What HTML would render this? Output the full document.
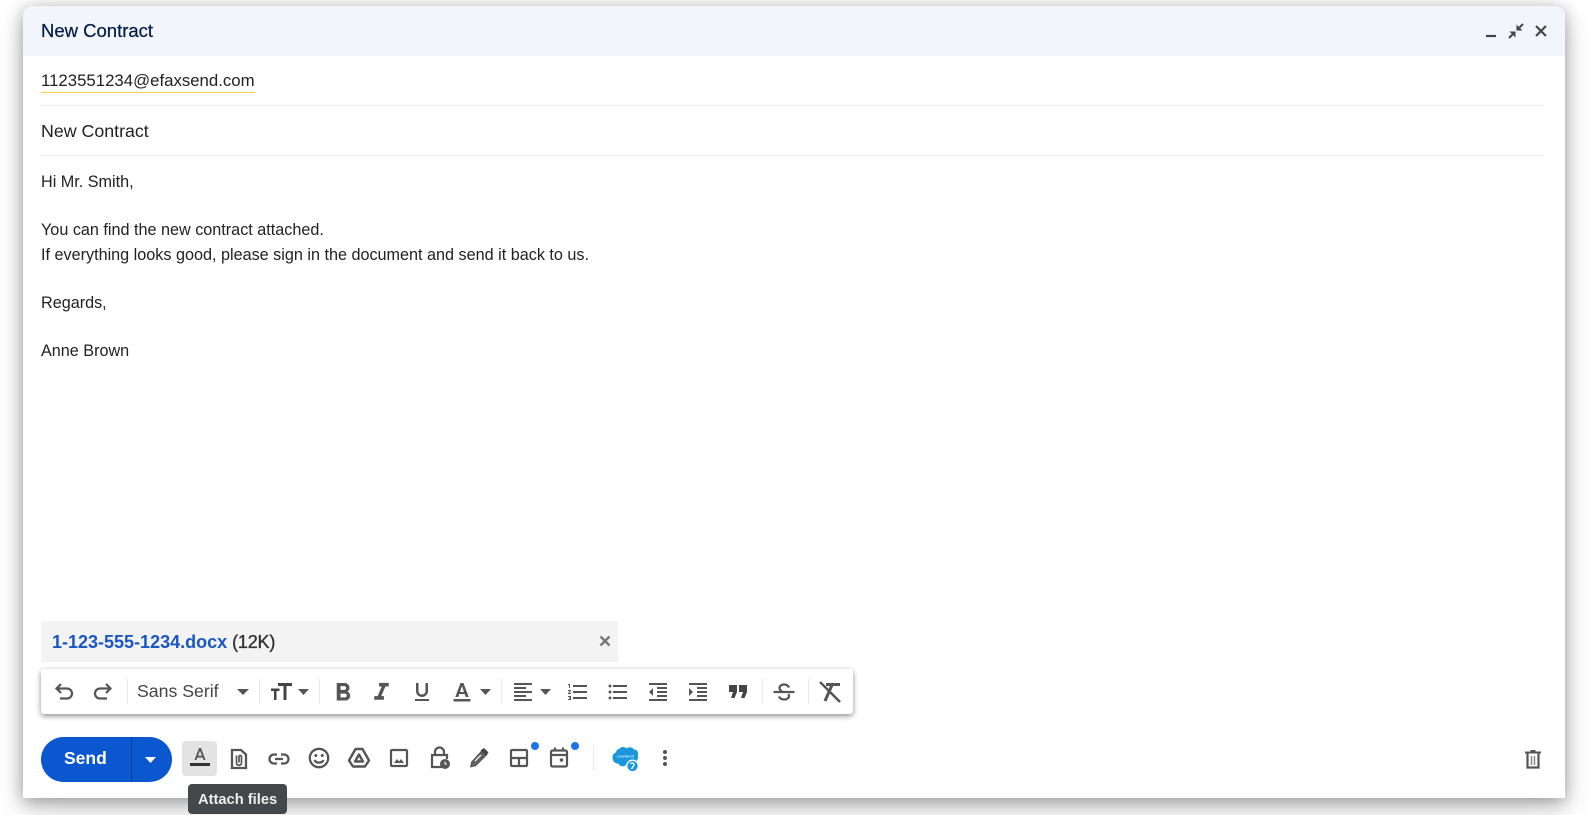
<!DOCTYPE html>
<html><head><meta charset="utf-8"><style>
*{box-sizing:border-box}
html,body{margin:0;padding:0;width:1594px;height:815px;overflow:hidden;background:#fff;font-family:"Liberation Sans",sans-serif}
.a{position:absolute}
.t{position:absolute;white-space:nowrap;line-height:20px}
svg.i{position:absolute;overflow:visible}
.s{position:absolute;width:1px;background:#e6e6e6}
.c{position:absolute;left:23px;top:6px;width:1542px;height:792px;background:#fff;border-radius:10px 10px 0 0;box-shadow:0 3px 16px rgba(0,0,0,.32),0 12px 30px rgba(0,0,0,.16)}
</style></head><body>
<div class="c"></div>
<div class="a" style="left:23px;top:6px;width:1542px;height:50px;background:#f2f6fc;border-radius:10px 10px 0 0"></div>
<div class="t" style="left:41px;top:21px;font-size:18.500px;color:#041e49;-webkit-text-stroke:.25px #041e49">New Contract</div>
<svg class="i" style="left:1486px;top:20px" width="70" height="22" fill="none" stroke="#444" stroke-width="2.200"><path d="M0 16H10"/><path d="M29.500 11.500V17.500L23.500 11.500zM30.500 10.500V4.500L36.500 10.500z" fill="#444" stroke="none"/><path d="M26.500 14.500L23 18M33.500 7.500L37 4" stroke-width="2"/><path d="M50 6L60 16M60 6L50 16"/></svg>

<div class="t" style="left:41px;top:71px;font-size:16.800px;color:#222;border-bottom:1px solid #fbc94a;height:22px">1123551234@efaxsend.com</div>
<div class="a" style="left:41px;top:105px;width:1504px;height:1px;background:#ececec"></div>
<div class="t" style="left:41px;top:121px;font-size:17.800px;color:#222">New Contract</div>
<div class="a" style="left:41px;top:155px;width:1504px;height:1px;background:#ececec"></div>

<div class="t" style="left:41px;top:172px;font-size:16.200px;color:#222">Hi Mr. Smith,</div>
<div class="t" style="left:41px;top:220px;font-size:16.200px;color:#222">You can find the new contract attached.</div>
<div class="t" style="left:41px;top:245px;font-size:16.200px;color:#222">If everything looks good, please sign in the document and send it back to us.</div>
<div class="t" style="left:41px;top:293px;font-size:16.200px;color:#222">Regards,</div>
<div class="t" style="left:41px;top:341px;font-size:16.200px;color:#222">Anne Brown</div>

<div class="a" style="left:41px;top:621px;width:577px;height:41px;background:#f3f3f3"></div>
<div class="t" style="left:52px;top:632px;font-size:18px;font-weight:bold;color:#1a56c4">1-123-555-1234.docx <span style="color:#333;font-weight:normal;letter-spacing:-.2px;-webkit-text-stroke:.35px #333">(12K)</span></div>
<svg class="i" style="left:598px;top:634px" width="14" height="14" fill="none" stroke="#777" stroke-width="2.400"><path d="M2.500 2.500L11.500 11.500M11.500 2.500L2.500 11.500"/></svg>

<div class="a" style="left:41px;top:669px;width:812px;height:45px;background:#fff;border-radius:3px;box-shadow:0 2px 6px rgba(0,0,0,.45)"></div>
<div class="s" style="left:127px;top:679px;height:25px"></div>
<div class="s" style="left:259px;top:679px;height:25px"></div>
<div class="s" style="left:319px;top:679px;height:25px"></div>
<div class="s" style="left:501px;top:679px;height:25px"></div>
<div class="s" style="left:762px;top:679px;height:25px"></div>
<div class="s" style="left:808px;top:679px;height:25px"></div>

<svg class="i" style="left:52px;top:680px" width="24" height="24" fill="none" stroke="#555" stroke-width="2.200"><path d="M9 4L4.500 8.500L9 13M5 8.500H15A5 5 0 0 1 15 18.500H8"/></svg>
<svg class="i" style="left:91px;top:680px" width="24" height="24" fill="none" stroke="#555" stroke-width="2.200"><path d="M15 4L19.500 8.500L15 13M19 8.500H9A5 5 0 0 0 9 18.500H16"/></svg>
<div class="t" style="left:137px;top:681px;font-size:17.700px;color:#444">Sans Serif</div>
<svg class="i" style="left:237px;top:689px" width="12" height="7" fill="#555"><path d="M0 0H12L6 6z"/></svg>
<svg class="i" style="left:270px;top:682px" width="24" height="20" fill="#444"><path d="M8 1H22V4H16.500V18H13.500V4H8zM1 6.500H9.500V9H6.500V18H4V9H1z"/></svg>
<svg class="i" style="left:298px;top:689px" width="12" height="7" fill="#555"><path d="M0 0H11L5.500 6z"/></svg>
<svg class="i" style="left:328px;top:678px" width="30" height="30" viewBox="0 0 24 24" fill="#555"><path d="M15.600 10.790c.97-.67 1.650-1.770 1.650-2.790 0-2.260-1.750-4-4-4H7v14h7.040c2.090 0 3.710-1.700 3.710-3.790 0-1.520-.86-2.820-2.150-3.420zM10 6.500h3c.83 0 1.500.67 1.500 1.500s-.67 1.500-1.500 1.500h-3v-3zm3.500 9H10v-3h3.500c.83 0 1.500.67 1.500 1.500s-.67 1.500-1.500 1.500z"/></svg>
<svg class="i" style="left:367px;top:678px" width="29" height="29" viewBox="0 0 24 24" fill="#555"><path d="M10 4v3h2.210l-3.420 8H6v3h8v-3h-2.210l3.420-8H18V4z"/></svg>
<svg class="i" style="left:410px;top:680px" width="24" height="24" fill="#555"><path d="M12 17c3.310 0 6-2.690 6-6V3h-2.500v8c0 1.930-1.570 3.500-3.500 3.500S8.500 12.930 8.500 11V3H6v8c0 3.310 2.690 6 6 6zm-7 2v2h14v-2H5z"/></svg>
<svg class="i" style="left:450px;top:680px" width="24" height="24" fill="#555"><path d="M10.500 3L5.300 17H8.300L9.300 14H14.700L15.700 17H18.700L13.500 3zM10 12L12 6L14 12zM3.500 19H20.500V21.500H3.500z"/></svg>
<svg class="i" style="left:480px;top:689px" width="12" height="7" fill="#555"><path d="M0 0H11L5.500 6z"/></svg>
<svg class="i" style="left:511px;top:680px" width="24" height="24" fill="#555"><path d="M15 15H3v2h12v-2zm0-8H3v2h12V7zM3 13h18v-2H3v2zm0 8h18v-2H3v2zM3 3v2h18V3H3z"/></svg>
<svg class="i" style="left:540px;top:689px" width="12" height="7" fill="#555"><path d="M0 0H11L5.500 6z"/></svg>
<svg class="i" style="left:566px;top:680px" width="24" height="24" fill="#555"><path d="M2 17h2v.5H3v1h1v.5H2v1h3v-4H2v1zm1-9h1V4H2v1h1v3zm-1 3h1.800L2 13.100v.9h3v-1H3.200L5 10.900V10H2v1zm5-6v2h14V5H7zm0 14h14v-2H7v2zm0-6h14v-2H7v2z"/></svg>
<svg class="i" style="left:606px;top:680px" width="24" height="24" fill="#555"><path d="M4 10.500c-.83 0-1.500.67-1.500 1.500s.67 1.500 1.500 1.500 1.500-.67 1.500-1.500-.67-1.500-1.500-1.500zm0-6c-.83 0-1.500.67-1.500 1.500S3.170 7.500 4 7.500 5.500 6.830 5.500 6 4.830 4.500 4 4.500zm0 12c-.83 0-1.500.68-1.500 1.500s.68 1.500 1.500 1.500 1.500-.68 1.500-1.500-.67-1.500-1.500-1.500zM7 19h14v-2H7v2zm0-6h14v-2H7v2zm0-8v2h14V5H7z"/></svg>
<svg class="i" style="left:646px;top:680px" width="24" height="24" fill="#555"><path d="M11 17h10v-2H11v2zm-8-5l4 4V8l-4 4zm0 9h18v-2H3v2zM3 3v2h18V3H3zm8 6h10V7H11v2zm0 4h10v-2H11v2z"/></svg>
<svg class="i" style="left:686px;top:680px" width="24" height="24" fill="#555"><path d="M3 21h18v-2H3v2zM3 8v8l4-4-4-4zm8 9h10v-2H11v2zM3 3v2h18V3H3zm8 6h10V7H11v2zm0 4h10v-2H11v2z"/></svg>
<svg class="i" style="left:729px;top:685px" width="18" height="13" fill="#444"><path d="M0 0H8V7L5.500 13H2L4 7H0zM10 0H18V7L15.500 13H12L14 7H10z"/></svg>
<svg class="i" style="left:772px;top:680px" width="24" height="24" fill="none" stroke="#555" stroke-width="2.200"><path d="M17 7.500C16 5.500 14 4.500 12 4.500C9.500 4.500 7.500 6 7.500 8C7.500 9.500 8.500 10.500 10 11.500M16.500 14C17 15 17 15.500 17 16C17 18.500 14.500 19.500 12 19.500C10 19.500 8 18.500 7 16.500M1.500 12H22.500"/></svg>
<svg class="i" style="left:818px;top:680px" width="24" height="24" fill="none" stroke="#555"><path d="M2 2L22 22" stroke-width="2.500"/><path d="M8 4.500H22" stroke-width="3"/><path d="M14 5L7 21" stroke-width="3"/></svg>

<div class="a" style="left:41px;top:737px;width:131px;height:45px;background:#0b57d0;border-radius:23px"></div>
<div class="a" style="left:131px;top:737px;width:1px;height:45px;background:#0a3d8f"></div>
<div class="t" style="left:64px;top:748px;font-size:17.500px;font-weight:bold;color:#fff">Send</div>
<svg class="i" style="left:145px;top:757px" width="12" height="7" fill="#fff"><path d="M0 0H11L5.500 6z"/></svg>

<div class="a" style="left:182px;top:741px;width:35px;height:35px;background:#e3e3e3;border-radius:4px"></div>
<svg class="i" style="left:188px;top:746px" width="24" height="24" fill="#555"><path d="M11 2L6.500 14H8.500L9.400 11.500H14.600L15.500 14H17.500L13 2zM10.100 9.700L12 4.500L13.900 9.700z"/><rect x="2" y="17" width="20" height="3" fill="#333"/></svg>
<svg class="i" style="left:229px;top:748px" width="20" height="22" fill="none" stroke="#555" stroke-width="2.300"><path d="M3 2H12L17 6.500V20H3z"/><path d="M7.500 7.500V15C7.500 18 12.500 18 12.500 15V9C12.500 7 10 7 10 9V14.500" stroke-width="1.700"/></svg>
<svg class="i" style="left:268px;top:750px" width="22" height="18" fill="none" stroke="#555" stroke-width="2.300"><path d="M9 4.500H6A4.500 4.500 0 0 0 6 13.500H9M13 4.500H16A4.500 4.500 0 0 1 16 13.500H13M7 9H15"/></svg>
<svg class="i" style="left:308px;top:747px" width="22" height="22" fill="none" stroke="#555" stroke-width="2.300"><circle cx="11" cy="11" r="9.200"/><circle cx="7.800" cy="8.500" r="1.500" fill="#555" stroke="none"/><circle cx="14.200" cy="8.500" r="1.500" fill="#555" stroke="none"/><path d="M6.500 13C8 16.500 14 16.500 15.500 13"/></svg>
<svg class="i" style="left:348px;top:747px" width="22" height="22" fill="none" stroke="#555" stroke-width="2.400"><path d="M7.500 2H14.500L21 13.500L17 19.500H5L1 13.500zM11 7.500L15 14.500H7z" stroke-linejoin="round"/></svg>
<svg class="i" style="left:390px;top:749px" width="18" height="18" fill="none" stroke="#555" stroke-width="2.200"><rect x="1" y="1" width="16" height="16" rx="1"/><path d="M4 14L7 10L9 12.500L11 10L14 14z" fill="#555" stroke="none"/></svg>
<svg class="i" style="left:429px;top:746px" width="22" height="24" fill="none" stroke="#555" stroke-width="2.200"><path d="M6 9V6A4.500 4.500 0 0 1 15 6V9M13 21H3V9H18V13"/><circle cx="16" cy="18" r="5" fill="#555" stroke="none"/><path d="M16 15.500V18H18" stroke="#fff" stroke-width="1"/></svg>
<svg class="i" style="left:468px;top:747px" width="22" height="22"><path d="M14.500 3.500L18.500 7.500L7.500 18.500L3 19.500L4 15z" fill="#666" stroke="#555" stroke-width="1.500"/><path d="M12.500 3.500L16 1L20.500 5.500L18 8.500z" fill="#444"/><path d="M7 14L13 8" stroke="#fff" stroke-width="1.200"/></svg>
<svg class="i" style="left:510px;top:749px" width="18" height="18" fill="none" stroke="#555" stroke-width="2.200"><rect x="1" y="1" width="16" height="16" rx="1"/><path d="M1 9H17M9 9V17"/></svg>
<svg class="i" style="left:550px;top:747px" width="18" height="21" fill="none" stroke="#555" stroke-width="2.200"><rect x="1" y="3.500" width="16" height="16" rx="1.500"/><path d="M1 8H17M5 .5V4M13 .5V4"/><circle cx="11.500" cy="13" r="1.800" fill="#555" stroke="none"/></svg>
<div class="a" style="left:531px;top:742px;width:8px;height:8px;border-radius:50%;background:#1a73e8"></div>
<div class="a" style="left:571px;top:742px;width:8px;height:8px;border-radius:50%;background:#1a73e8"></div>
<div class="s" style="left:593px;top:746px;height:25px;background:#e6e6e6"></div>
<svg class="i" style="left:612px;top:747px" width="30" height="26"><path d="M7 2C9 -.5 13 -.5 14.500 1.500C17 -.5 20.500 0 22 2.500C25 2.500 26.800 5 25.800 8C27 11 25 15 21.500 15.500C20 19 16.500 19.500 14.500 17.500C12 20.500 7.500 19.500 6.500 16.500C3.500 17 .3 14.500 .5 10C.8 7 3 5.500 4 5.500C4 4 5.500 2 7 2z" fill="#1b96dc"/><text x="13.500" y="10.500" font-size="4" fill="#fff" text-anchor="middle" font-family="Liberation Sans">LiveSend</text><circle cx="20.500" cy="19" r="5.800" fill="#1b96dc" stroke="#fff" stroke-width="1.300"/><path d="M18.500 17C18.500 15.500 22.500 15.500 22 18L19.500 22" fill="none" stroke="#fff" stroke-width="1.300"/></svg>
<svg class="i" style="left:661px;top:749px" width="8" height="18" fill="#555"><circle cx="4" cy="3" r="2"/><circle cx="4" cy="9" r="2"/><circle cx="4" cy="15" r="2"/></svg>
<svg class="i" style="left:1524px;top:749px" width="18" height="20" fill="none" stroke="#555" stroke-width="2.200"><path d="M3.500 4.500V18.500H14.500V4.500"/><path d="M1 3.500H17M6.500 2H11.500" stroke-width="2"/><path d="M7.500 7V16M10.500 7V16" stroke="#888" stroke-width="1.500"/></svg>

<div class="a" style="left:188px;top:784px;width:99px;height:30px;background:#45484a;border-radius:4px"></div>
<div class="t" style="left:198px;top:790px;font-size:14.700px;font-weight:bold;color:#eee">Attach files</div>
</body></html>
